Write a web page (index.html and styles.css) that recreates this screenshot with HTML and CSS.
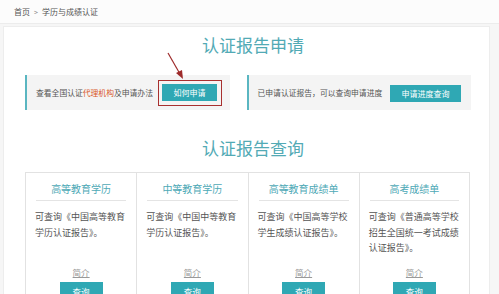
FILE: index.html
```html
<!DOCTYPE html>
<html lang="zh-CN">
<head>
<meta charset="utf-8">
<title>学历与成绩认证</title>
<link rel="stylesheet" href="styles.css">
</head>
<body>
<div class="crumb"><span>首页</span><span class="sep">&gt;</span><span>学历与成绩认证</span></div>
<div class="panel">
  <h2 class="title">认证报告申请</h2>
  <div class="apply-row">
    <div class="apply-box left">
      <span class="apply-text">查看全国认证<span class="hl">代理机构</span>及申请办法</span>
      <span class="mark"><span class="btn">如何申请</span></span>
    </div>
    <div class="apply-box right">
      <span class="apply-text">已申请认证报告，可以查询申请进度</span>
      <span class="btn wide">申请进度查询</span>
    </div>
  </div>
  <h2 class="title second">认证报告查询</h2>
  <div class="cards">
    <div class="card">
      <div class="card-title">高等教育学历</div>
      <div class="card-desc">可查询《中国高等教育学历认证报告》。</div>
      <div class="card-link">简介</div>
      <div class="card-btn">查询</div>
    </div>
    <div class="card">
      <div class="card-title">中等教育学历</div>
      <div class="card-desc">可查询《中国中等教育学历认证报告》。</div>
      <div class="card-link">简介</div>
      <div class="card-btn">查询</div>
    </div>
    <div class="card">
      <div class="card-title">高等教育成绩单</div>
      <div class="card-desc">可查询《中国高等学校学生成绩认证报告》。</div>
      <div class="card-link">简介</div>
      <div class="card-btn">查询</div>
    </div>
    <div class="card last">
      <div class="card-title">高考成绩单</div>
      <div class="card-desc">可查询《普通高等学校招生全国统一考试成绩认证报告》。</div>
      <div class="card-link">简介</div>
      <div class="card-btn">查询</div>
    </div>
  </div>
  <svg class="arrow" width="30" height="32" viewBox="0 0 30 32">
    <line x1="3" y1="2" x2="15" y2="23" stroke="#9e2b2b" stroke-width="1.2"/>
    <polygon points="18,28 11,22 17,19" fill="#9e2b2b"/>
  </svg>
</div>
</body>
</html>
```
FILE: styles.css
```css
* { box-sizing: border-box; }
html, body { margin: 0; padding: 0; }
body {
  width: 499px;
  height: 294px;
  overflow: hidden;
  background: #f6f6f6;
  font-family: "Noto Sans CJK SC", "Noto Sans", sans-serif;
  color: #555;
}
.crumb {
  height: 24px;
  padding-left: 14px;
  display: flex;
  align-items: center;
  gap: 4px;
  font-size: 8px;
  color: #555;
  background: #fcfcfc;
  border-bottom: 1px solid #ececec;
}
.crumb .sep { color: #888; font-size: 7px; }
.panel {
  position: relative;
  margin: 2px 0 0 3px;
  width: 487px;
  height: 300px;
  background: #fff;
  border: 1px solid #ededed;
  padding: 6px 18px 0 21px;
}
.title {
  margin: 0;
  text-align: center;
  font-size: 17px;
  line-height: 24px;
  font-weight: normal;
  color: #52aab5;
  padding-left: 10px;
}
.title.second { margin-top: 26px; }
.apply-row {
  margin-top: 18px;
  display: flex;
  gap: 17px;
}
.apply-box {
  height: 35px;
  background: #f4f4f4;
  border-left: 2px solid #5ab6c1;
  display: flex;
  align-items: center;
  padding-left: 9px;
}
.apply-box.left { width: 205px; padding-right: 8px; }
.apply-box.right { width: 225px; padding-right: 10px; }
.apply-text { font-size: 7.8px; color: #555; white-space: nowrap; }
.hl { color: #d9582b; }
.mark {
  margin-left: auto;
  border: 1.5px solid #a8302f;
  padding: 2.5px 3.5px 4px;
  display: flex;
  margin-top: 1px;
}
.btn {
  display: inline-flex;
  align-items: center;
  justify-content: center;
  width: 55px;
  height: 17px;
  background: #2fa8b4;
  color: #fff;
  font-size: 8px;
}
.btn.wide { width: 71px; margin-left: auto; margin-top: 1px; }
.cards {
  margin-top: 12px;
  width: 445px;
  display: grid;
  grid-template-columns: repeat(4, 1fr);
  border-top: 1px solid #e2e2e2;
}
.card {
  border-left: 1px solid #e2e2e2;
  height: 140px;
  display: flex;
  flex-direction: column;
  align-items: center;
}
.card.last { border-right: 1px solid #e2e2e2; }
.card-title {
  align-self: stretch;
  margin: 0 10px;
  padding: 8px 0 3px;
  line-height: 16px;
  font-size: 10px;
  text-align: center;
  color: #4ea9b6;
  border-bottom: 1px solid #e4e4e4;
}
.card-desc {
  align-self: stretch;
  padding: 8px 8px 0 9px;
  height: 64px;
  font-size: 9px;
  line-height: 15.5px;
  color: #555;
}
.card-link {
  font-size: 8.5px;
  line-height: 14px;
  color: #999;
  text-decoration: underline;
}
.card-btn {
  margin-top: 3px;
  width: 43px;
  height: 18px;
  background: #2fa8b4;
  color: #fff;
  font-size: 8.5px;
  display: flex;
  align-items: center;
  justify-content: center;
}
.arrow {
  position: absolute;
  left: 161px;
  top: 24px;
}
```
